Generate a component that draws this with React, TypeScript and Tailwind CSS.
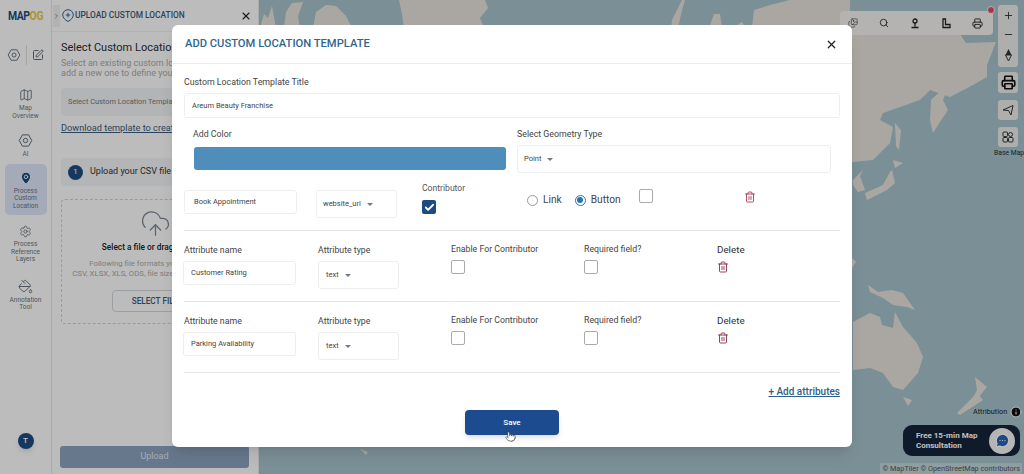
import { ChevronRight, CloudUpload, Map as MapIcon, MapPin, Minus, PaintBucket, Plus, Printer, Search, Settings, SquarePen, Trash2, X, Check, Pointer, MessageCircleMore, Info, Images } from "lucide-react";

const font = "font-['Roboto','Liberation_Sans',sans-serif]";

function Caret() {
    return <span className="ml-[6px] inline-block w-0 h-0 border-x-[3px] border-x-transparent border-t-[3px] border-t-[#777]"></span>;
}

function Hexagon({ size = 16 }: { size?: number }) {
    return (
        <svg width={size} height={size} viewBox="0 0 24 24" fill="none" stroke="#5f6b78" strokeWidth="1.6">
            <path d="M7 3h10l5 9-5 9H7l-5-9z" />
            <circle cx="12" cy="12" r="3.5" />
        </svg>
    );
}

function NavItem({ label, icon, className = "py-[5px]" }: { label: string[]; icon: React.ReactNode; className?: string }) {
    return (
        <div className={`w-[42px] flex flex-col items-center rounded-[5px] ${className}`}>
            {icon}
            <div className="mt-[3px] text-[6.5px] leading-[7.5px] text-[#6b7480] text-center">
                {label.map((l) => <div key={l}>{l}</div>)}
            </div>
        </div>
    );
}

function Sidebar() {
    return (
        <aside className="w-[52px] h-full shrink-0 bg-[#fbfbfb] border-r border-[#e3e3e3] flex flex-col items-center">
            <div className="h-[32px] w-full flex items-center justify-center text-[13px] font-bold tracking-[-0.5px] scale-x-[0.8]">
                <span className="text-[#1d4b80]">MAP</span><span className="text-[#e8c53a]">OG</span>
            </div>
            <div className="mt-[13px] flex items-center gap-[5px]">
                <Hexagon size={14} />
                <div className="w-px h-[20px] bg-[#ddd]"></div>
                <SquarePen size={12} color="#5f6b78" />
            </div>
            <div className="mt-[18px] flex flex-col items-center">
                <NavItem label={["Map", "Overview"]} icon={<MapIcon size={14} color="#5f6b78" strokeWidth={1.5} />} />
                <NavItem className="mt-[3px] py-[5px]" label={["AI"]} icon={<Hexagon size={15} />} />
                <NavItem className="pt-[7px] pb-[5px] bg-[#dbe3f4]" label={["Process", "Custom", "Location"]} icon={<MapPin size={14} color="#fff" fill="#1d4b80" strokeWidth={1.5} />} />
                <NavItem className="mt-[5px] py-[5px]" label={["Process", "Reference", "Layers"]} icon={<Settings size={13} color="#5f6b78" strokeWidth={1.5} />} />
                <NavItem className="mt-[5px] py-[5px]" label={["Annotation", "Tool"]} icon={<PaintBucket size={15} color="#5f6b78" strokeWidth={1.5} />} />
            </div>
            <div className="mt-auto mb-[25px] w-[16px] h-[16px] rounded-full bg-[#1d4b80] text-white text-[8px] font-medium flex items-center justify-center shadow-md">T</div>
        </aside>
    );
}

function UploadPanel() {
    return (
        <section className="w-[207px] h-full shrink-0 bg-[#fbfbfb] border-r border-[#e3e3e3] flex flex-col">
            <div className="h-[32px] flex items-center pl-[1px] pr-[6px] border-b border-[#eee]">
                <div className="w-[7px] h-[22px] flex items-center justify-center bg-[#ececec]"><ChevronRight size={8} color="#555" /></div>
                <svg width="12" height="13" viewBox="0 0 12 13" fill="none" stroke="#2f6690" strokeWidth="1" className="ml-[2px]">
                    <path d="M6 12.500C3 11 .7 8.500 .7 6a5.300 5.300 0 0 1 10.600 0c0 2.500-2.300 5-5.300 6.500z" />
                    <path d="M6 3.800v4.400M3.800 6h4.400" />
                </svg>
                <span className="ml-[1px] text-[8.400px] font-medium text-[#3a5a78]">UPLOAD CUSTOM LOCATION</span>
                <X size={12} color="#222" className="ml-auto" strokeWidth={2.2} />
            </div>
            <div className="pl-[9px] pt-[9px] flex-1 flex flex-col overflow-hidden">
                <div className="text-[11px] leading-[14px] text-[#2b2b2b] whitespace-nowrap">Select Custom Location Template</div>
                <div className="mt-[3px] text-[9px] leading-[10px] text-[#a8a8a8] whitespace-nowrap">Select an existing custom location template or<br />add a new one to define your</div>
                <div className="mt-[10px] h-[28px] w-[188px] bg-[#eef0f2] rounded-[4px] flex items-center pl-[7px] text-[7.4px] text-[#777] whitespace-nowrap overflow-hidden">Select Custom Location Template</div>
                <div className="mt-[6px] text-[9.2px] leading-[12px] text-[#3a5a78] underline whitespace-nowrap">Download template to create</div>
                <div className="mt-[24px] h-[28px] w-[188px] bg-[#f1f2f3] rounded-[4px] flex items-center pl-[7px]">
                    <span className="w-[15px] h-[15px] rounded-full bg-[#1d4b80] text-white text-[8px] flex items-center justify-center">1</span>
                    <span className="ml-[7px] text-[9px] text-[#333] whitespace-nowrap">Upload your CSV file</span>
                </div>
                <div className="mt-[13px] h-[125px] w-[188px] border border-dashed border-[#cfcfcf] rounded-[4px] flex flex-col items-center pt-[8px]">
                    <CloudUpload size={31} color="#7b8794" strokeWidth={1} />
                    <div className="mt-[2px] text-[8.3px] font-medium text-[#222] whitespace-nowrap">Select a file or drag and drop</div>
                    <div className="mt-[6px] text-[7.8px] leading-[10px] text-[#a8a8a8] text-center whitespace-nowrap">Following file formats you can upload:<br />CSV, XLSX, XLS, ODS, file size not exceed 10 MB</div>
                    <div className="mt-[11px] h-[22px] w-[86px] border border-[#cfd4da] rounded-[4px] flex items-center justify-center text-[8.2px] font-medium text-[#3a5a78]">SELECT FILE</div>
                </div>
            </div>
            <div className="mb-[6px] ml-[8px] h-[22px] w-[189px] bg-[#8aa0bd] rounded-[3px] flex items-center justify-center text-[9px] text-[#dbe3ee]">Upload</div>
        </section>
    );
}

function MapShapes() {
    return (
        <svg className="absolute inset-0 w-full h-full" viewBox="259 0 765 474" fill="#e3dfd8">
            <path d="M260 28 L264 14 L268 18 L272 6 L276 28Z" />
            <path d="M284 28 L286 12 L292 3 L303 2 L298 16 L300 28Z" />
            <path d="M313 28 L316 12 L326 5 L336 6 L346 16 L352 28Z" />
            <path d="M399 0 L485 0 L488 8 L480 18 L484 28 L404 28 L402 14Z" />
            <path d="M682 0 L672 20 L671 28 L678 28 L682 10 L685 0Z" />
            <path d="M709 28 L714 14 L720 14 L722 28Z" />
            <path d="M732 28 L742 22 L746 28Z" />
            <path d="M752 28 L754 10 L770 5 L790 0 L850 0 L850 28Z" />
            <path d="M852 20 L960 34 L966 43 L996 42 L987 65 L987 77 L973 85 L950 97 L930 90 L920 100 L883 113 L880 120 L893 127 L890 143 L873 160 L852 162Z" />
            <path d="M950 82 L943 100 L948 110 L940 122 L933 133 L930 120 L931 100Z" />
            <path d="M895 123 L901 130 L899 150 L896 146Z" />
            <path d="M893 160 L903 163 L895 168Z" />
            <path d="M892 170 L895 183 L887 190 L867 200 L865 193 L883 185 L890 172Z" />
            <path d="M853 180 L863 170 L860 176 L865 190 L858 192 L853 185Z" />
            <path d="M852 258 L856 262 L852 268Z" />
            <path d="M868 285 L878 292 L892 290 L903 293 L915 310 L907 307 L893 305 L883 298 L870 292Z" />
            <path d="M853 322 L870 313 L880 317 L882 325 L893 328 L895 312 L903 327 L917 343 L923 357 L918 373 L903 390 L893 387 L883 373 L870 368 L853 370Z" />
            <path d="M975 377 L987 387 L978 398 L972 400 L977 390Z" />
            <path d="M977 393 L983 400 L960 415 L957 413Z" />
            <path d="M903 397 L912 400 L908 406Z" />
            <path d="M360 449 L368 452 L366 455Z" />
        </svg>
    );
}

function MapControls() {
    return (
        <>
            <div className="absolute left-[840px] top-[11px] w-[153px] h-[24px] bg-[#f0efed] rounded-[4px] flex items-center justify-between pl-[8px] pr-[10px] text-[#222]">
                <Images size={10} strokeWidth={1.6} color="#444" />
                <Search size={10} strokeWidth={2} />
                <svg width="10" height="11" viewBox="0 0 10 11" fill="none" stroke="#222" strokeWidth="1.3"><circle cx="5" cy="3" r="2" /><path d="M5 5v3.500M1.500 9.500h7" /></svg>
                <svg width="10" height="11" viewBox="0 0 10 11" fill="none" stroke="#222" strokeWidth="1.3"><path d="M2 1h2.500v5.500H9v3H2z" /></svg>
                <Printer size={11} strokeWidth={2} />
            </div>
            <div className="absolute left-[987px] top-[6px] w-[8px] h-[8px] rounded-full bg-[#e8455f] border border-[#eee]"></div>
            <div className="absolute left-[998px] top-[5px] w-[20px] h-[62px] bg-[#e8e8e6] rounded-[3px] flex flex-col items-center justify-between py-[5px]">
                <Plus size={11} color="#333" />
                <Minus size={11} color="#333" />
                <svg width="9" height="14" viewBox="0 0 9 14"><path d="M4.500 1L7.500 7H1.500z" fill="#333" /><path d="M4.500 13L7.500 7H1.500z" fill="none" stroke="#333" /></svg>
            </div>
            <div className="absolute left-[998px] top-[72px] w-[20px] h-[21px] bg-[#e8e8e6] rounded-[3px] flex items-center justify-center">
                <Printer size={15} color="#111" strokeWidth={2.6} />
            </div>
            <div className="absolute left-[998px] top-[100px] w-[20px] h-[20px] bg-[#e8e8e6] rounded-[3px] flex items-center justify-center">
                <svg width="12" height="12" viewBox="0 0 12 12" fill="none" stroke="#333" strokeWidth="1"><path d="M1 6L11 1.500L9 11L6.500 6.500z" /></svg>
            </div>
            <div className="absolute left-[998px] top-[127px] w-[20px] h-[20px] bg-[#e8e8e6] rounded-[3px] flex items-center justify-center">
                <svg width="12" height="12" viewBox="0 0 12 12" fill="none" stroke="#333" strokeWidth="1"><rect x="1" y="1" width="4.500" height="4.500" rx="1" /><circle cx="8.500" cy="3.500" r="2" /><rect x="1" y="6.500" width="4.500" height="4.500" rx="1" /><rect x="6.500" y="6.500" width="4.500" height="4.500" rx="1" /></svg>
            </div>
            <div className="absolute left-[994px] top-[148px] text-[6.800px] leading-[10px] text-[#1a2a3a] whitespace-nowrap">Base Map</div>
            <div className="absolute left-[973px] top-[406px] flex items-center gap-[3px] text-[7.300px] leading-[12px] text-[#222]">
                Attribution
                <Info size={12} color="#fff" fill="#111" />
            </div>
            <div className="absolute left-[903px] top-[425px] w-[117px] h-[31px] bg-[#14233a] rounded-[9px] flex items-center pl-[13px] pr-[5px] text-[8px] leading-[10px] font-bold text-white">
                <div>Free 15-min Map<br />Consultation</div>
                <div className="ml-auto w-[26px] h-[26px] rounded-full bg-[#f2f2f2] flex items-center justify-center">
                    <MessageCircleMore size={15} color="#fff" fill="#2563b0" />
                </div>
            </div>
            <div className="absolute right-[2px] bottom-0 h-[11px] px-[2px] bg-white/30 text-[7.300px] leading-[11px] text-[#555] whitespace-nowrap">© MapTiler © OpenStreetMap contributors</div>
        </>
    );
}

function Box({ className, children }: { className: string; children?: React.ReactNode }) {
    return <div className={`shrink-0 bg-white border border-[#eeeeee] rounded-[3px] flex items-center text-[#444] text-[7.500px] ${className}`}>{children}</div>;
}

function Square({ checked }: { checked?: boolean }) {
    if (checked) {
        return <div className="w-[14px] h-[14px] rounded-[2px] bg-[#1d4b80] flex items-center justify-center"><Check size={11} color="#fff" strokeWidth={4} /></div>;
    }
    return <div className="w-[14px] h-[14px] rounded-[2px] border border-[#aaa] bg-white"></div>;
}

function AttrRow({ name }: { name: string }) {
    return (
        <div className="h-[71px] border-t border-[#e6e6e6] grid grid-cols-[134px_133px_133px_133px_1fr] pt-[12px] text-[8.750px] leading-[12px] text-[#444]">
            <div>
                <div className="mt-[1px]">Attribute name</div>
                <Box className="mt-[5px] -ml-[1px] w-[113px] h-[24px] pl-[7px]">{name}</Box>
            </div>
            <div>
                <div className="mt-[1px]">Attribute type</div>
                <Box className="mt-[5px] w-[81px] h-[28px] pl-[7px]">text<Caret /></Box>
            </div>
            <div>
                <div>Enable For Contributor</div>
                <div className="mt-[5px]"><Square /></div>
            </div>
            <div>
                <div>Required field?</div>
                <div className="mt-[5px]"><Square /></div>
            </div>
            <div>
                <div className="mt-[1px] text-[9.800px] text-[#333]">Delete</div>
                <Trash2 size={12} color="#8f2d45" className="mt-[5px]" strokeWidth={1.8} />
            </div>
        </div>
    );
}

function Modal() {
    return (
        <div className="relative ml-[172px] mt-[25px] w-[680px] h-[422px] bg-white rounded-[6px] shadow-lg">
            <div className="h-[39px] flex items-center justify-between pl-[13px] pr-[14px] border-b border-[#ececec]">
                <h2 className="text-[11.200px] font-medium text-[#2f6690]">ADD CUSTOM LOCATION TEMPLATE</h2>
                <X size={13} color="#222" strokeWidth={2.2} />
            </div>
            <div className="pl-[12px] pr-[12px]">
                <div className="mt-[12px] text-[8.800px] leading-[12px] text-[#444]">Custom Location Template Title</div>
                <Box className="mt-[5px] w-full h-[25px] pl-[7px]">Areum Beauty Franchise</Box>
                <div className="mt-[10px] flex">
                    <div className="ml-[9px] w-[324px]">
                        <div className="text-[8.800px] leading-[12px] text-[#444]">Add Color</div>
                        <div className="mt-[7px] ml-[1px] w-[312px] h-[23px] rounded-[3px] bg-[#4f8dbb]"></div>
                    </div>
                    <div>
                        <div className="text-[8.800px] leading-[12px] text-[#444]">Select Geometry Type</div>
                        <Box className="mt-[5px] w-[314px] h-[28px] pl-[6px]">Point<Caret /></Box>
                    </div>
                </div>
                <div className="mt-[17px] h-[40px] flex items-start">
                    <Box className="w-[113px] h-[24px] pl-[9px]">Book Appointment</Box>
                    <Box className="ml-[19px] w-[81px] h-[28px] pl-[6px]">website_url<Caret /></Box>
                    <div className="ml-[25px] w-[90px] -mt-[8px]">
                        <div className="text-[8.600px] leading-[12px] text-[#555]">Contributor</div>
                        <div className="mt-[6px]"><Square checked /></div>
                    </div>
                    <div className="ml-[15px] mt-[3px] flex items-center text-[10.200px] leading-[14px] text-[#444]">
                        <span className="w-[11px] h-[11px] rounded-full border border-[#999]"></span>
                        <span className="ml-[5px]">Link</span>
                        <span className="ml-[13px] w-[11px] h-[11px] rounded-full border border-[#1f77b4] flex items-center justify-center"><span className="w-[6px] h-[6px] rounded-full bg-[#1f77b4]"></span></span>
                        <span className="ml-[5px]">Button</span>
                    </div>
                    <div className="ml-[18px] -mt-[1px]"><Square /></div>
                    <Trash2 size={12} color="#a93a55" className="ml-[91px] mt-[1px]" strokeWidth={1.8} />
                </div>
                <AttrRow name="Customer Rating" />
                <AttrRow name="Parking Availability" />
                <div className="border-t border-[#e6e6e6] pt-[12px] flex justify-end">
                    <span className="text-[10px] leading-[14px] font-medium text-[#2f5f85] underline">+ Add attributes</span>
                </div>
                <div className="mt-[11px] flex justify-center">
                    <div className="w-[94px] h-[25px] bg-[#1d4b8f] rounded-[4px] shadow-md flex items-center justify-center text-white text-[8px] font-medium">Save</div>
                </div>
            </div>
            <Pointer size={11} color="#333" fill="#fff" className="absolute left-[333px] top-[406px]" strokeWidth={1.4} />
        </div>
    );
}

export default function App() {
    return (
        <div className={`relative w-[1024px] h-[474px] overflow-hidden flex ${font}`}>
            <Sidebar />
            <UploadPanel />
            <div className="relative flex-1 h-full bg-[#a3c1c9]">
                <MapShapes />
            </div>
            <MapControls />
            <div className="absolute inset-0 bg-black/25">
                <Modal />
            </div>
        </div>
    );
}
